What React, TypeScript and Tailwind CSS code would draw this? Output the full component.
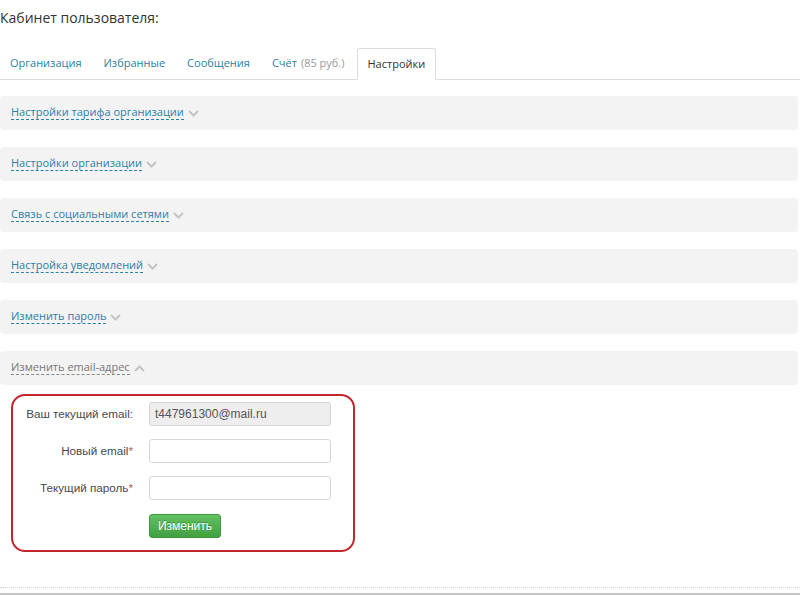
import React from 'react';

const tabs = [
  { label: 'Организация' },
  { label: 'Избранные' },
  { label: 'Сообщения' },
  { label: 'Счёт', extra: '(85 руб.)' },
];

const sections = [
  'Настройки тарифа организации',
  'Настройки организации',
  'Связь с социальными сетями',
  'Настройка уведомлений',
  'Изменить пароль',
];

function Chevron({ up = false }: { up?: boolean }) {
  return (
    <svg width="11" height="7" viewBox="0 0 11 7" className="ml-[4px] mt-[2px]">
      <polyline
        points={up ? '1,6 5.5,1.5 10,6' : '1,1 5.5,5.5 10,1'}
        fill="none"
        stroke="#c4c4c4"
        strokeWidth="2"
      />
    </svg>
  );
}

function Row({ label, children }: { label: React.ReactNode; children: React.ReactNode }) {
  return (
    <div className="flex items-center">
      <div className="w-[120px] text-right text-[11.7px] text-[#4a4a4a]">{label}</div>
      <div className="ml-[16px]">{children}</div>
    </div>
  );
}

export default function App() {
  return (
    <div className="relative h-[595px] w-[800px] overflow-hidden bg-white font-['Open_Sans',sans-serif]">
      <h1 className="pt-[8px] text-[14px] leading-[20px] text-[#333]">Кабинет пользователя:</h1>

      <ul className="mt-[20px] flex h-[32px] border-b border-[#dddddd]">
        {tabs.map((t) => (
          <li key={t.label} className="mr-[2px] flex items-center px-[10px] text-[11px] text-[#2c7fa6]">
            {t.label}
            {t.extra && <span className="ml-[4px] text-[#999]">{t.extra}</span>}
          </li>
        ))}
        <li className="-mb-px flex items-center rounded-t-[3px] border border-b-white border-[#dddddd] bg-white px-[10px] text-[11px] text-[#333]">
          Настройки
        </li>
      </ul>

      <div className="mt-[16px] flex flex-col gap-[17px] pr-[2px]">
        {sections.map((s) => (
          <div key={s} className="flex h-[34px] items-center rounded-[4px] bg-[#f3f3f3] px-[11px] pb-[2px]">
            <span className="border-b border-dashed border-[#2c7fa6] text-[11px] leading-[15px] text-[#2c7fa6]">{s}</span>
            <Chevron />
          </div>
        ))}
        <div className="flex h-[34px] items-center rounded-[4px] bg-[#f3f3f3] px-[11px] pb-[2px]">
          <span className="border-b border-dashed border-[#888] text-[11px] leading-[15px] text-[#777]">Изменить email-адрес</span>
          <Chevron up />
        </div>
      </div>

      <div className="ml-[11px] mt-[9px] flex h-[158px] w-[344px] flex-col gap-[13px] rounded-[14px] border-2 border-[#c4262e] pt-[6px] font-['Liberation_Sans',Arial,sans-serif]">
        <Row label="Ваш текущий email:">
          <div className="flex h-[24px] w-[182px] items-center rounded-[3px] border border-[#d6d6d6] bg-[#eeeeee] px-[5px] text-[12px] text-[#555]">
            t447961300@mail.ru
          </div>
        </Row>
        <Row label={<>Новый email<span className="text-[#a86060]">*</span></>}>
          <input className="block h-[24px] w-[182px] rounded-[3px] border border-[#d6d6d6] bg-white" />
        </Row>
        <Row label={<>Текущий пароль<span className="text-[#a86060]">*</span></>}>
          <input className="block h-[24px] w-[182px] rounded-[3px] border border-[#d6d6d6] bg-white" />
        </Row>
        <div className="ml-[136px]">
          <button className="h-[24px] w-[72px] rounded-[3px] border border-[#3f9a3f] bg-gradient-to-b from-[#62c162] to-[#41a041] text-[12px] text-white [text-shadow:0_-1px_0_rgba(0,0,0,0.25)]">
            Изменить
          </button>
        </div>
      </div>

      <div className="mt-[35px] border-b border-dotted border-[#cfcfcf]" />
      <div className="mt-[5px] h-[2px] bg-[#c6c6c6]" />
    </div>
  );
}
